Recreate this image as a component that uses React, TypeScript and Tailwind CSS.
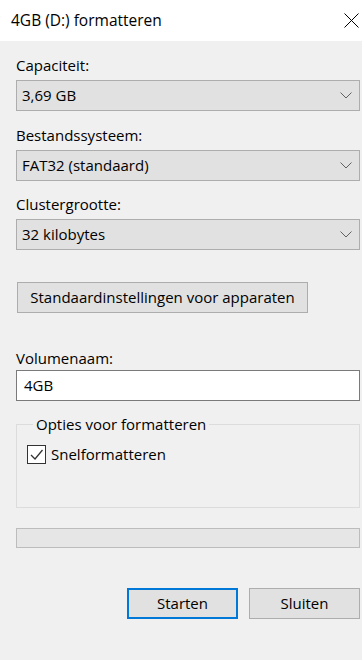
import { useState } from "react";

const font = { fontFamily: '"Open Sans", "Noto Sans", sans-serif' };

function Chevron() {
  return (
    <svg width="12" height="7" viewBox="0 0 12 7" className="shrink-0">
      <polyline points="0.5,0.5 6,6 11.5,0.5" fill="none" stroke="#606060" strokeWidth="1" />
    </svg>
  );
}

function Dropdown({ value }: { value: string }) {
  return (
    <div className="flex h-[31px] items-center justify-between border border-[#adadad] bg-[#e1e1e1] pl-[5px] pr-[7px] text-[15px] text-black">
      <span>{value}</span>
      <Chevron />
    </div>
  );
}

function Label({ text, className }: { text: string; className?: string }) {
  return <div className={"h-[20px] text-[15px] leading-[20px] text-black " + (className ?? "")}>{text}</div>;
}

export default function App() {
  const [quick, setQuick] = useState(true);

  return (
    <div className="flex h-[660px] w-[362px] flex-col bg-[#f0f0f0]" style={font}>
      {/* Title bar */}
      <div className="flex h-[41px] items-center justify-between bg-white pl-[11px] pr-[3px]">
        <span className="text-[15.5px] text-black">4GB (D:) formatteren</span>
        <svg width="15" height="15" viewBox="0 0 15 15">
          <path d="M0.5 0.5 L14.5 14.5 M14.5 0.5 L0.5 14.5" stroke="#000" strokeWidth="1" />
        </svg>
      </div>

      <div className="flex flex-col pl-[16px] pr-[2px]">
        <Label text="Capaciteit:" className="mt-[14px] mb-[5px]" />
        <Dropdown value="3,69 GB" />

        <Label text="Bestandssysteem:" className="mt-[14px] mb-[5px]" />
        <Dropdown value="FAT32 (standaard)" />

        <Label text="Clustergrootte:" className="mt-[13px] mb-[5px]" />
        <Dropdown value="32 kilobytes" />

        <button className="mt-[32px] ml-[1px] h-[31px] w-[291px] border border-[#adadad] bg-[#e1e1e1] text-[15px] text-black">
          Standaardinstellingen voor apparaten
        </button>

        <Label text="Volumenaam:" className="mt-[35px] mb-[2px]" />
        <div className="flex h-[31px] items-center border border-[#7a7a7a] bg-white pl-[7px] text-[15px] text-black">
          4GB
        </div>

        <fieldset className="mt-[13px] h-[94px] border border-[#dcdcdc] pl-[10px]">
          <legend className="ml-[6px] px-[3px] text-[15px] leading-[20px] text-black">Opties voor formatteren</legend>
          <label className="mt-[9px] flex items-center gap-[5px] text-[15px] text-black">
            <span
              className="flex h-[19px] w-[19px] items-center justify-center border border-[#333] bg-white"
              onClick={() => setQuick(!quick)}
            >
              {quick && (
                <svg width="17" height="17" viewBox="0 0 17 17">
                  <polyline points="3,9 7,13 14.5,4" fill="none" stroke="#333" strokeWidth="1.3" />
                </svg>
              )}
            </span>
            Snelformatteren
          </label>
        </fieldset>

        <div className="mt-[20px] h-[20px] border border-[#bcbcbc] bg-[#e6e6e6]" />

        <div className="mt-[40px] flex justify-end gap-[11px]">
          <button className="h-[31px] w-[111px] border-2 border-[#0078d7] bg-[#e1e1e1] text-[15px] text-black">
            Starten
          </button>
          <button className="h-[31px] w-[111px] border border-[#adadad] bg-[#e1e1e1] text-[15px] text-black">
            Sluiten
          </button>
        </div>
      </div>
    </div>
  );
}
